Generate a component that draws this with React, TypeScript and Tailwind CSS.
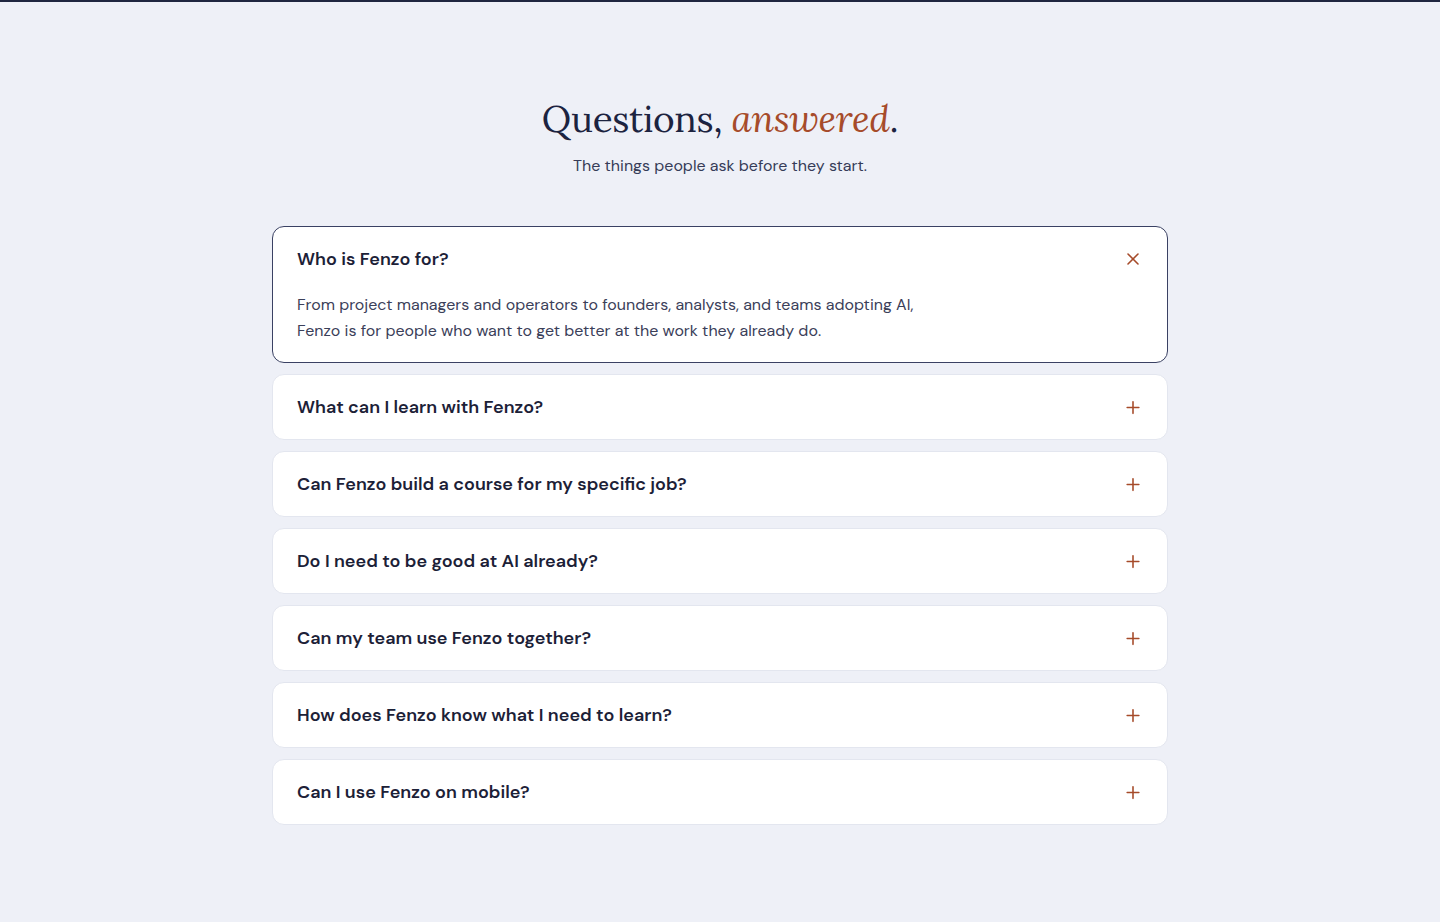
import { Plus, X } from "lucide-react";
import { useState } from "react";

const faqs = [
  {
    q: "Who is Fenzo for?",
    a: "From project managers and operators to founders, analysts, and teams adopting AI, Fenzo is for people who want to get better at the work they already do.",
  },
  { q: "What can I learn with Fenzo?", a: "" },
  { q: "Can Fenzo build a course for my specific job?", a: "" },
  { q: "Do I need to be good at AI already?", a: "" },
  { q: "Can my team use Fenzo together?", a: "" },
  { q: "How does Fenzo know what I need to learn?", a: "" },
  { q: "Can I use Fenzo on mobile?", a: "" },
];

const sans = "font-['DM_Sans','Inter','Noto_Sans',sans-serif]";

export default function App() {
  const [open, setOpen] = useState(0);

  return (
    <div className={`min-h-[922px] border-t-2 border-[#1f2640] bg-[#eef0f7] ${sans}`}>
      <section className="mx-auto max-w-4xl pt-[93px] pb-24">
        <div className="text-center">
          <h2 className="font-['Lora','DejaVu_Serif',serif] text-[37px] leading-[48px] tracking-[-0.01em] text-[#1c2340]">
            Questions, <em className="text-[#a64b2a]">answered</em>.
          </h2>
          <p className="mt-[11px] text-[16px] leading-6 text-[#363c58]">The things people ask before they start.</p>
        </div>

        <div className="mt-[48px] flex flex-col gap-[11px]">
          {faqs.map((item, index) => {
            const isOpen = open === index;
            return (
              <div
                key={item.q}
                className={`rounded-xl border bg-white ${isOpen ? "border-[#3a4163]" : "border-[#e3e6ef]"}`}
              >
                <button
                  onClick={() => setOpen(isOpen ? -1 : index)}
                  className="flex h-16 w-full items-center justify-between px-6 text-left"
                >
                  <span className="text-[18px] font-semibold text-[#1c2137]">{item.q}</span>
                  <span className="flex h-5 w-5 items-center justify-center text-[#a64b2a]">
                    {isOpen ? <X size={20} strokeWidth={1.9} /> : <Plus size={21} strokeWidth={1.9} />}
                  </span>
                </button>
                {isOpen && (
                  <p className="mt-px max-w-[680px] px-6 pb-[18px] text-[16px] leading-[26px] text-[#3b4059]">{item.a}</p>
                )}
              </div>
            );
          })}
        </div>
      </section>
    </div>
  );
}
